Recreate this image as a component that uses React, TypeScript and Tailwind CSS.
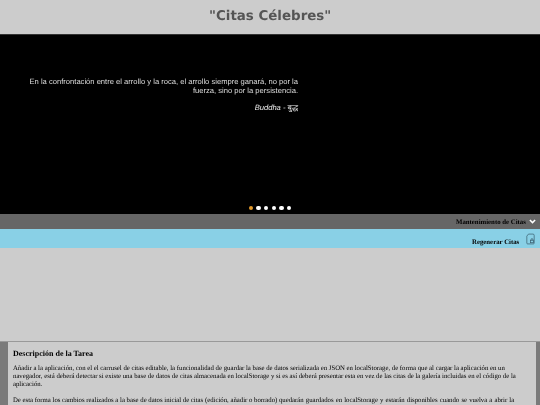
import React from "react";

const dots = [0, 1, 2, 3, 4, 5];

export default function App() {
  return (
    <div className="h-[405px] w-[540px] overflow-hidden bg-[#cccccc] font-['Liberation_Serif',serif] [text-rendering:geometricPrecision]">
      <header className="flex h-[35px] items-center justify-center border-b border-[#333333] bg-[#cccccc]">
        <h1 className="font-['DejaVu_Sans',sans-serif] text-[13.4px] font-bold leading-none text-[#555555] [will-change:transform]">"Citas Célebres"</h1>
      </header>
      <section className="relative h-[179px] bg-black pl-[27.5px] pt-[42px]">
        <div className="w-[270px] text-right font-['Liberation_Sans',sans-serif] text-[#dddddd] [will-change:transform]">
          <p className="text-[7.6px] leading-[9px]">En la confrontación entre el arrollo y la roca, el arrollo siempre ganará, no por la fuerza, sino por la persistencia.</p>
          <p className="mt-[8px] text-[7.6px] italic leading-[9px] text-[#eeeeee]">Buddha - <span className="font-['Noto_Sans',sans-serif]">बुद्ध</span></p>
        </div>
        <div className="absolute bottom-[4px] left-[248.75px] flex gap-[3.1px]">
          {dots.map((d) => (
            <span key={d} className={d === 0 ? "h-[4.5px] w-[4.5px] rounded-full bg-[#e49b2c]" : "h-[4.5px] w-[4.5px] rounded-full bg-white"} />
          ))}
        </div>
      </section>
      <div className="flex h-[15px] items-center justify-end gap-[2.5px] bg-[#666666] pr-[3px]">
        <span className="mt-[3px] text-[6.8px] font-bold leading-none text-black [will-change:transform]">Mantenimiento de Citas</span>
        <svg width="9" height="9" viewBox="0 0 24 24" fill="none" stroke="white" strokeWidth="4"><path d="M5 8l7 7 7-7" /></svg>
      </div>
      <div className="flex h-[18.5px] items-end justify-end gap-[6.5px] bg-[#89d0e6] pr-[5.5px]">
        <span className="mb-[1px] text-[6.8px] font-bold leading-[8px] text-black [will-change:transform]">Regenerar Citas</span>
        <svg className="mb-[3px]" width="9" height="12" viewBox="0 0 11 13" fill="none" stroke="#3a5f70" strokeWidth="0.9">
          <path d="M3 .5h5.5a1.5 1.5 0 0 1 1.5 1.5v9.5a1 1 0 0 1-1 1H2a1 1 0 0 1-1-1V3z" />
          <rect x="5.5" y="8" width="3.5" height="3" />
          <path d="M6.3 8V7a1 1 0 0 1 2 0v1" />
        </svg>
      </div>
      <div className="h-[93.5px]" />
      <section className="flex h-[64px] border-t border-[#999999]">
        <div className="w-[8px] shrink-0 bg-[#7a7a7a]" />
        <div className="min-w-0 flex-1 pl-[5px] pr-[8px] pt-[7px] text-black [will-change:transform]">
          <h2 className="text-[8px] font-bold leading-[9px]">Descripción de la Tarea</h2>
          <p className="mt-[7px] text-[6.75px] leading-[8px]">Añadir a la aplicación, con el el carrusel de citas editable, la funcionalidad de guardar la base de datos serializada en JSON en localStorage, de forma que al cargar la aplicación en un navegador, está deberá detectar si existe una base de datos de citas almacenada en localStorage y si es así deberá presentar esta en vez de las citas de la galería incluidas en el código de la aplicación.</p>
          <p className="mt-[8px] text-[6.75px] leading-[8px]">De esta forma los cambios realizados a la base de datos inicial de citas (edición, añadir o borrado) <span className="[word-spacing:0.45px]">quedarán guardados en localStorage y estarán disponibles cuando se vuelva a abrir la</span> aplicación en el mismo navegador.</p>
        </div>
        <div className="w-[4px] shrink-0 bg-[#7a7a7a]" />
      </section>
    </div>
  );
}
